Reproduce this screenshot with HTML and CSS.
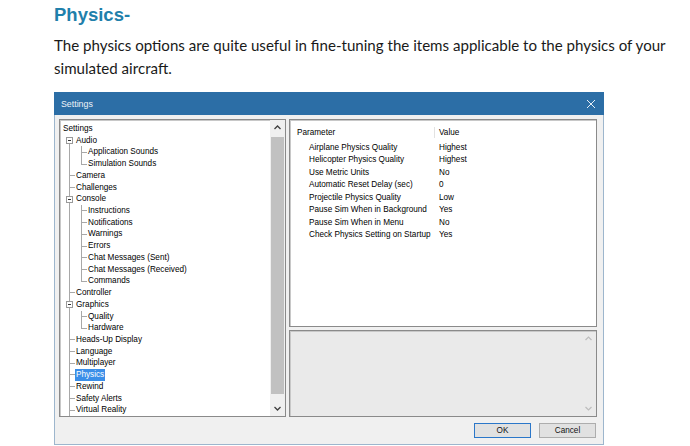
FILE: index.html
```html
<!DOCTYPE html>
<html>
<head>
<meta charset="utf-8">
<link rel="stylesheet" href="styles.css">
</head>
<body>
<div class="page">
  <h1 class="heading">Physics-</h1>
  <p class="intro">The physics options are quite useful in fine-tuning the items applicable to the physics of your simulated aircraft.</p>

  <div class="dialog">
    <div class="titlebar">
      <span class="title">Settings</span>
      <svg class="close" width="10" height="10" viewBox="0 0 10 10"><path d="M1 1L9 9M9 1L1 9" stroke="#e6eef6" stroke-width="1" fill="none"/></svg>
    </div>
    <div class="body">
      <div class="tree panel">
        <div class="tree-list">
          <div class="row"><span class="label root">Settings</span></div>
          <div class="row"><span class="g first"><span class="box"></span></span><span class="label">Audio</span></div>
          <div class="row"><span class="g v"></span><span class="g tee"></span><span class="label">Application Sounds</span></div>
          <div class="row"><span class="g v"></span><span class="g end"></span><span class="label">Simulation Sounds</span></div>
          <div class="row"><span class="g tee"></span><span class="label">Camera</span></div>
          <div class="row"><span class="g tee"></span><span class="label">Challenges</span></div>
          <div class="row"><span class="g v"><span class="box"></span></span><span class="label">Console</span></div>
          <div class="row"><span class="g v"></span><span class="g tee"></span><span class="label">Instructions</span></div>
          <div class="row"><span class="g v"></span><span class="g tee"></span><span class="label">Notifications</span></div>
          <div class="row"><span class="g v"></span><span class="g tee"></span><span class="label">Warnings</span></div>
          <div class="row"><span class="g v"></span><span class="g tee"></span><span class="label">Errors</span></div>
          <div class="row"><span class="g v"></span><span class="g tee"></span><span class="label">Chat Messages (Sent)</span></div>
          <div class="row"><span class="g v"></span><span class="g tee"></span><span class="label">Chat Messages (Received)</span></div>
          <div class="row"><span class="g v"></span><span class="g end"></span><span class="label">Commands</span></div>
          <div class="row"><span class="g tee"></span><span class="label">Controller</span></div>
          <div class="row"><span class="g v"><span class="box"></span></span><span class="label">Graphics</span></div>
          <div class="row"><span class="g v"></span><span class="g tee"></span><span class="label">Quality</span></div>
          <div class="row"><span class="g v"></span><span class="g end"></span><span class="label">Hardware</span></div>
          <div class="row"><span class="g tee"></span><span class="label">Heads-Up Display</span></div>
          <div class="row"><span class="g tee"></span><span class="label">Language</span></div>
          <div class="row"><span class="g tee"></span><span class="label">Multiplayer</span></div>
          <div class="row"><span class="g tee"></span><span class="label selected">Physics</span></div>
          <div class="row"><span class="g tee"></span><span class="label">Rewind</span></div>
          <div class="row"><span class="g tee"></span><span class="label">Safety Alerts</span></div>
          <div class="row"><span class="g tee"></span><span class="label">Virtual Reality</span></div>
          <div class="row filler"><span class="g v"></span></div>
        </div>
        <div class="vscroll">
          <svg class="arrow" width="15" height="15" viewBox="0 0 15 15"><path d="M4.5 9L7.5 6L10.5 9" stroke="#404040" stroke-width="1.3" fill="none"/></svg>
          <div class="thumb"></div>
          <svg class="arrow" width="15" height="15" viewBox="0 0 15 15"><path d="M4.5 6L7.5 9L10.5 6" stroke="#404040" stroke-width="1.3" fill="none"/></svg>
        </div>
      </div>

      <div class="right">
        <div class="grid panel">
          <div class="grid-head">
            <span class="h-param">Parameter</span>
            <span class="h-value">Value</span>
          </div>
          <div class="grid-row"><span class="c-param">Airplane Physics Quality</span><span class="c-value">Highest</span></div>
          <div class="grid-row"><span class="c-param">Helicopter Physics Quality</span><span class="c-value">Highest</span></div>
          <div class="grid-row"><span class="c-param">Use Metric Units</span><span class="c-value">No</span></div>
          <div class="grid-row"><span class="c-param">Automatic Reset Delay (sec)</span><span class="c-value">0</span></div>
          <div class="grid-row"><span class="c-param">Projectile Physics Quality</span><span class="c-value">Low</span></div>
          <div class="grid-row"><span class="c-param">Pause Sim When in Background</span><span class="c-value">Yes</span></div>
          <div class="grid-row"><span class="c-param">Pause Sim When in Menu</span><span class="c-value">No</span></div>
          <div class="grid-row"><span class="c-param">Check Physics Setting on Startup</span><span class="c-value">Yes</span></div>
        </div>
        <div class="desc panel">
          <div class="desc-area"></div>
          <div class="vscroll faint">
            <svg class="arrow" width="15" height="15" viewBox="0 0 15 15"><path d="M4.5 9L7.5 6L10.5 9" stroke="#bdbdbd" stroke-width="1.2" fill="none"/></svg>
            <div class="spacer"></div>
            <svg class="arrow" width="15" height="15" viewBox="0 0 15 15"><path d="M4.5 6L7.5 9L10.5 6" stroke="#bdbdbd" stroke-width="1.2" fill="none"/></svg>
          </div>
        </div>
      </div>
    </div>
    <div class="footer">
      <button class="btn default">OK</button>
      <button class="btn">Cancel</button>
    </div>
  </div>
</div>
</body>
</html>
```

FILE: styles.css
```css
html, body {
  margin: 0;
  padding: 0;
  background: #ffffff;
}

.page {
  padding: 5px 0 0 54px;
  font-family: "Liberation Sans", Arial, sans-serif;
}

.heading {
  margin: 0;
  font-family: "Liberation Sans", Arial, sans-serif;
  font-weight: bold;
  font-size: 18.5px;
  line-height: 20px;
  color: #1f80ab;
}

.intro {
  margin: 9px 0 0 0;
  width: 636px;
  font-family: Lato, "Liberation Sans", sans-serif;
  font-size: 15.1px;
  line-height: 23px;
  color: #1a1a1a;
}

.dialog {
  margin-top: 12px;
  width: 548px;
  border: 1px solid #9db6cd;
  border-top: none;
  background: #f0f0f0;
  font-family: "Liberation Sans", Arial, sans-serif;
  font-size: 8.2px;
  color: #000;
}

.titlebar {
  height: 23px;
  margin: 0 -1px;
  padding: 0 8px 0 7px;
  background: #2c6ea6;
  display: flex;
  align-items: center;
  justify-content: space-between;
}

.title {
  color: #eef3f8;
  font-size: 8.8px;
}

.close {
  display: block;
}

.body {
  height: 298px;
  padding: 4px 6px 0 4px;
  display: grid;
  grid-template-columns: 227px 1fr;
  column-gap: 3px;
}

.panel {
  box-sizing: border-box;
  border: 1px solid #8a8a8a;
  box-shadow: inset 1px 1px 0 #c8c8c8;
}

.tree {
  background: #fff;
  display: flex;
  height: 298px;
}

.tree-list {
  flex: 1;
  display: flex;
  flex-direction: column;
  padding: 3px 0 0 3px;
}

.row {
  display: flex;
  height: 11.72px;
  flex: none;
}

.row.filler {
  flex: 1;
  height: auto;
}

.label {
  line-height: 11.72px;
  padding: 0 1px;
  white-space: nowrap;
}

.label.root {
  margin-left: -1px;
}

.label.selected {
  background: #3a8ee8;
  color: #fff;
}

.g {
  flex: none;
  width: 12px;
  display: flex;
  align-items: center;
  padding-left: 3px;
  box-sizing: border-box;
}

.g.v {
  background: linear-gradient(#a8a8a8, #a8a8a8) 6px 0 / 1px 100% no-repeat;
}

.g.first {
  background: linear-gradient(#a8a8a8, #a8a8a8) 6px 100% / 1px 50% no-repeat;
}

.g.tee {
  background:
    linear-gradient(#a8a8a8, #a8a8a8) 6px 0 / 1px 100% no-repeat,
    linear-gradient(#a8a8a8, #a8a8a8) 6px 50% / 6px 1px no-repeat;
}

.g.end {
  background:
    linear-gradient(#a8a8a8, #a8a8a8) 6px 0 / 1px 50% no-repeat,
    linear-gradient(#a8a8a8, #a8a8a8) 6px 50% / 6px 1px no-repeat;
}

.box {
  width: 7px;
  height: 7px;
  box-sizing: border-box;
  border: 1px solid #9a9a9a;
  background: linear-gradient(#333, #333) center / 3px 1px no-repeat, #fff;
}

.vscroll {
  flex: none;
  width: 15px;
  display: flex;
  flex-direction: column;
  background: #f0f0f0;
}

.arrow {
  display: block;
  flex: none;
}

.thumb {
  flex: 1;
  margin: 2px 1px 7px 1px;
  background: #c1c1c1;
}

.spacer {
  flex: 1;
}

.vscroll.faint {
  background: transparent;
}

.right {
  display: flex;
  flex-direction: column;
  gap: 3px;
}

.grid {
  height: 208px;
  background: #fff;
  padding: 3px 0 0 1px;
}

.grid-head {
  height: 19px;
  display: flex;
  align-items: center;
}

.h-param {
  width: 137px;
  padding-left: 6px;
  line-height: 11px;
}

.h-value {
  border-left: 1px solid #e2e2e2;
  padding-left: 4px;
  line-height: 11px;
}

.grid-row {
  display: flex;
  height: 12.43px;
  line-height: 12.43px;
}

.c-param {
  width: 125px;
  padding-left: 18px;
  white-space: nowrap;
}

.c-value {
  padding-left: 5px;
}

.desc {
  flex: 1;
  background: #eaeaea;
  display: flex;
}

.desc-area {
  flex: 1;
}

.footer {
  display: flex;
  justify-content: flex-end;
  gap: 8px;
  padding: 6px 7px 6px 0;
}

.btn {
  width: 57px;
  height: 15px;
  margin: 0;
  padding: 0;
  box-sizing: border-box;
  border: 1px solid #adadad;
  background: #e1e1e1;
  font-family: "Liberation Sans", Arial, sans-serif;
  font-size: 8.2px;
  color: #111;
  line-height: 12px;
}

.btn.default {
  border: 1.5px solid #2b77c9;
}
```
